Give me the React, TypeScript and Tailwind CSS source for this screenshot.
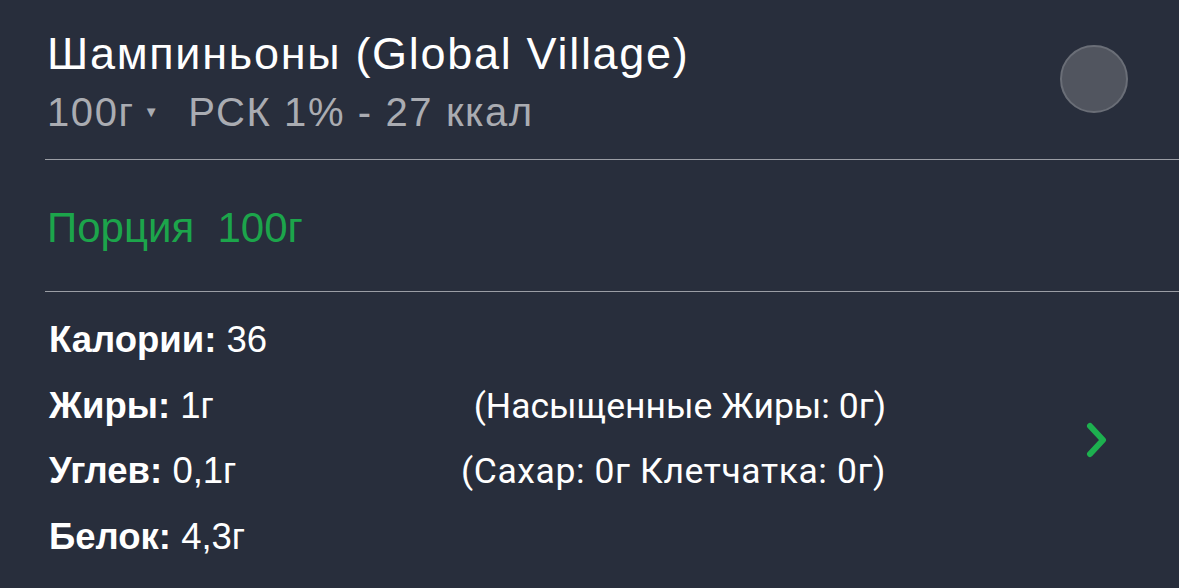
const rows = [
  { label: "Калории:", value: "36", extra: "", extraClass: "" },
  { label: "Жиры:", value: "1г", extra: "(Насыщенные Жиры: 0г)", extraClass: "" },
  { label: "Углев:", value: "0,1г", extra: "(Сахар: 0г Клетчатка: 0г)", extraClass: "tracking-[0.6px]" },
  { label: "Белок:", value: "4,3г", extra: "", extraClass: "" },
];

export default function App() {
  return (
    <main className="w-[1179px] h-[588px] overflow-hidden bg-[#282e3c] pl-[45px] font-[family-name:'Liberation_Sans',Arial,sans-serif]">
      {/* header */}
      <div className="flex items-start justify-between h-[160px] border-b border-[#9b9ea5] pr-[51px]">
        <div className="pl-[2px] pt-[28px]">
          <h1 className="text-[45px] leading-[52px] text-white tracking-[1.7px]">
            Шампиньоны (Global Village)
          </h1>
          <p className="flex items-center mt-[7px] text-[40px] leading-[50px] text-[#aaacb2] tracking-[1.6px]">
            <span>100г</span>
            <span className="ml-[9px] mr-[28px] text-[15px]">▼</span>
            <span>РСК 1% - 27 ккал</span>
          </p>
        </div>
        <div className="mt-[45px] w-[68px] h-[68px] rounded-full bg-[#51555f] border-2 border-[#6a6e77]" />
      </div>

      {/* portion */}
      <div className="h-[132px] flex items-center border-b border-[#9b9ea5] pl-[2px] pt-[4px]">
        <span className="text-[42px] text-[#1ca54b]">Порция&nbsp;&nbsp;100г</span>
      </div>

      {/* nutrition */}
      <div className="flex items-center pl-[4px] pt-[16px]">
        <div className="flex flex-col w-[840px]">
          {rows.map((r) => (
            <div key={r.label} className="flex items-center h-[65.5px]">
              <div className="w-[400px] text-[36.5px] text-white">
                <span className="font-bold">{r.label}</span> {r.value}
              </div>
              <div className={`w-[437px] text-right text-[35.5px] text-white font-[family-name:Roboto,sans-serif] ${r.extraClass}`}>
                {r.extra}
              </div>
            </div>
          ))}
        </div>
        <div className="ml-auto mr-[71px] mt-[2px]">
          <svg width="22" height="36" viewBox="0 0 22 36" fill="none">
            <path d="M4 4 L17 18 L4 32" stroke="#1db04f" strokeWidth="6" strokeLinecap="round" strokeLinejoin="round" />
          </svg>
        </div>
      </div>
    </main>
  );
}
